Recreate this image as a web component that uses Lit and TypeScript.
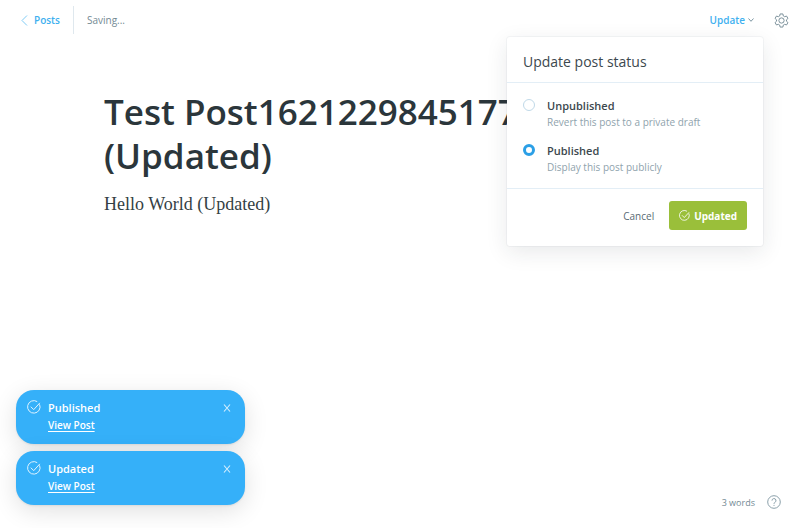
import { LitElement, html, css, svg } from "lit";
import { customElement, property, state } from "lit/decorators.js";

const check = svg`<path d="M21.5 7.5A10.7 10.7 0 1 1 17.5 2.8" /><path d="M6.5 11.5l5 5L22 5" />`;

@customElement("app-toast")
class AppToast extends LitElement {
  @property() heading = "";

  static styles = css`
    :host {
      display: block;
    }
    .toast {
      display: flex;
      align-items: flex-start;
      gap: 7px;
      box-sizing: border-box;
      min-height: 54px;
      padding: 10px 14px 8px 11px;
      border-radius: 18px;
      background: #35b0f9;
      color: #fff;
      box-shadow: 0 1px 2px rgba(0, 0, 0, 0.08), 0 6px 24px rgba(0, 0, 0, 0.12);
    }
    .icon {
      width: 14px;
      height: 14px;
      flex: none;
      fill: none;
      stroke: #e1f3fe;
      stroke-width: 1.7;
    }
    .text {
      flex: 1;
      display: flex;
      flex-direction: column;
      align-items: flex-start;
      gap: 2px;
    }
    .heading {
      font-size: 11px;
      line-height: 15px;
      font-weight: 600;
    }
    .link {
      color: #fff;
      font-size: 10px;
      line-height: 16px;
      font-weight: 600;
      text-decoration: underline;
      text-underline-offset: 2px;
    }
    .close {
      display: flex;
      padding: 4px 0;
      margin: 0;
      border: 0;
      background: none;
      cursor: pointer;
    }
    .close svg {
      width: 8px;
      height: 8px;
      fill: none;
      stroke: #d7effe;
      stroke-width: 1.1;
    }
  `;

  render() {
    return html`
      <div class="toast" role="status">
        <svg class="icon" viewBox="0 0 24 24" aria-hidden="true">${check}</svg>
        <div class="text">
          <span class="heading">${this.heading}</span>
          <a class="link" href="#post">View Post</a>
        </div>
        <button class="close" type="button" aria-label="Close">
          <svg viewBox="0 0 8 8"><path d="M1 .5l6 7M7 .5l-6 7" /></svg>
        </button>
      </div>
    `;
  }
}

@customElement("app-root")
class AppRoot extends LitElement {
  @state() status = "published";

  static styles = css`
    :host {
      display: flex;
      flex-direction: column;
      position: relative;
      min-height: 100vh;
      background: #fff;
      color: #394047;
      font-family: "Open Sans", "Noto Sans", sans-serif;
      font-size: 10px;
      overflow: hidden;
    }
    button {
      font-family: inherit;
      margin: 0;
      border: 0;
      background: none;
      cursor: pointer;
    }
    svg {
      fill: none;
    }
    .bar {
      display: flex;
      align-items: center;
      justify-content: space-between;
      height: 28px;
      padding: 6px 11px 0 21px;
    }
    .side {
      display: flex;
      align-items: center;
    }
    .back {
      display: flex;
      align-items: center;
      gap: 6px;
      padding-right: 13px;
      border-right: 1px solid #dfe8ee;
      color: #3eb0ef;
      line-height: 28px;
      font-weight: 600;
      text-decoration: none;
    }
    .back svg {
      width: 7px;
      height: 11px;
      stroke: #7fcbf5;
    }
    .saving {
      padding-left: 13px;
      color: #738a94;
    }
    .update {
      display: flex;
      align-items: center;
      gap: 3px;
      padding: 0;
      color: #3eb0ef;
      font-size: 10px;
      font-weight: 600;
    }
    .update svg {
      width: 6px;
      height: 4px;
      stroke: #7c95a2;
    }
    .gear {
      display: flex;
      padding: 0;
      margin-left: 20px;
    }
    .gear svg {
      width: 15px;
      height: 15px;
      stroke: #738a94;
    }
    .post {
      flex: 1;
      padding: 56px 120px 0 104px;
    }
    .title {
      margin: 0;
      color: #2b363b;
      font-size: 35px;
      line-height: 44px;
      font-weight: 600;
      overflow-wrap: break-word;
    }
    .body {
      margin: 14px 0 0;
      font-family: "Liberation Serif", serif;
      font-size: 18px;
      line-height: 24px;
      color: #343f44;
    }
    .menu {
      position: absolute;
      top: 37px;
      right: 37px;
      width: 256px;
      border-radius: 3px;
      background: #fff;
      box-shadow: 0 0 0 1px rgba(99, 114, 130, 0.06), 0 6px 22px rgba(27, 39, 51, 0.1);
    }
    .menu-title {
      margin: 0;
      padding: 15px 16px 10px;
      border-bottom: 1px solid #e3eef6;
      font-size: 14px;
      line-height: 20px;
      font-weight: 400;
      color: #3c484e;
    }
    .options {
      display: flex;
      flex-direction: column;
      gap: 13px;
      padding: 15px 16px 13px;
      border-bottom: 1px solid #e3eef6;
    }
    .option {
      display: flex;
      align-items: flex-start;
      gap: 12px;
    }
    .radio {
      appearance: none;
      box-sizing: border-box;
      flex: none;
      width: 12px;
      height: 12px;
      margin: 1px 0 0;
      border: 1px solid #c0d9e8;
      border-radius: 50%;
      background: #fff;
    }
    .radio:checked {
      border: 3px solid #2b9fe6;
    }
    .label {
      display: flex;
      flex-direction: column;
      color: #3c484e;
      font-size: 11px;
      line-height: 16px;
      font-weight: 600;
    }
    .hint {
      color: #8fa3ad;
      font-size: 10px;
      font-weight: 400;
    }
    .actions {
      display: flex;
      justify-content: flex-end;
      align-items: center;
      gap: 15px;
      padding: 12px 16px 16px;
    }
    .cancel {
      padding: 0;
      color: #586a73;
      font-size: 10px;
    }
    .save {
      display: flex;
      align-items: center;
      gap: 4px;
      height: 29px;
      padding: 0 10px;
      border-radius: 3px;
      background: #9abf3a;
      color: #fff;
      font-size: 10px;
      font-weight: 700;
    }
    .save svg {
      width: 11px;
      height: 11px;
      stroke: #fff;
      stroke-width: 1.8;
    }
    .toasts {
      position: absolute;
      left: 16px;
      bottom: 23px;
      width: 229px;
      display: flex;
      flex-direction: column;
      gap: 7px;
    }
    .foot {
      display: flex;
      justify-content: flex-end;
      align-items: center;
      gap: 12px;
      padding: 0 19px 19px;
      color: #738a94;
      font-size: 9px;
    }
    .help {
      display: flex;
      color: #738a94;
    }
    .help svg {
      width: 14px;
      height: 14px;
      stroke: #8ba0aa;
    }
  `;

  option(value: string, name: string, hint: string) {
    return html`
      <div class="option">
        <input
          class="radio"
          type="radio"
          name="status"
          id=${value}
          .checked=${this.status === value}
          @change=${() => (this.status = value)}
        />
        <label class="label" for=${value}>${name}<span class="hint">${hint}</span></label>
      </div>
    `;
  }

  render() {
    return html`
      <header class="bar">
        <div class="side">
          <a class="back" href="#posts">
            <svg viewBox="0 0 7 11" aria-hidden="true"><path d="M6 .5L1 5.5l5 5" /></svg>Posts
          </a>
          <span class="saving">Saving...</span>
        </div>
        <div class="side">
          <button class="update" type="button">
            Update<svg viewBox="0 0 6 4" aria-hidden="true"><path d="M.5 .5L3 3.3 5.5 .5" /></svg>
          </button>
          <button class="gear" type="button" aria-label="Settings">
            <svg viewBox="0 0 24 24" stroke-width="1.5" stroke-linejoin="round">
              <circle cx="12" cy="12" r="4.2" />
              <path
                d="M9.8 1.5h4.4l.7 3.2 2.1 1.2 3.1-1 2.2 3.8-2.4 2.2v2.2l2.4 2.2-2.2 3.8-3.1-1-2.1 1.2-.7 3.2H9.8l-.7-3.2L7 18.1l-3.1 1-2.2-3.8 2.4-2.2v-2.2L1.7 8.7l2.2-3.8 3.1 1 2.1-1.2z"
              />
            </svg>
          </button>
        </div>
      </header>

      <main class="post">
        <h1 class="title">Test Post1621229845177 (Updated)</h1>
        <p class="body">Hello World (Updated)</p>
      </main>

      <footer class="foot">
        <span>3 words</span>
        <a class="help" href="#help" aria-label="Help">
          <svg viewBox="0 0 14 14">
            <circle cx="7" cy="7" r="6.3" />
            <path d="M5 5.6a2 2 0 1 1 2.8 1.8Q7 7.8 7 8.8M7 9.9v1" />
          </svg>
        </a>
      </footer>

      <section class="menu" aria-label="Update post status">
        <h2 class="menu-title">Update post status</h2>
        <div class="options">
          ${this.option("unpublished", "Unpublished", "Revert this post to a private draft")}
          ${this.option("published", "Published", "Display this post publicly")}
        </div>
        <div class="actions">
          <button class="cancel" type="button">Cancel</button>
          <button class="save" type="button">
            <svg viewBox="0 0 24 24" aria-hidden="true">${check}</svg>Updated
          </button>
        </div>
      </section>

      <aside class="toasts">
        <app-toast heading="Published"></app-toast>
        <app-toast heading="Updated"></app-toast>
      </aside>
    `;
  }
}
